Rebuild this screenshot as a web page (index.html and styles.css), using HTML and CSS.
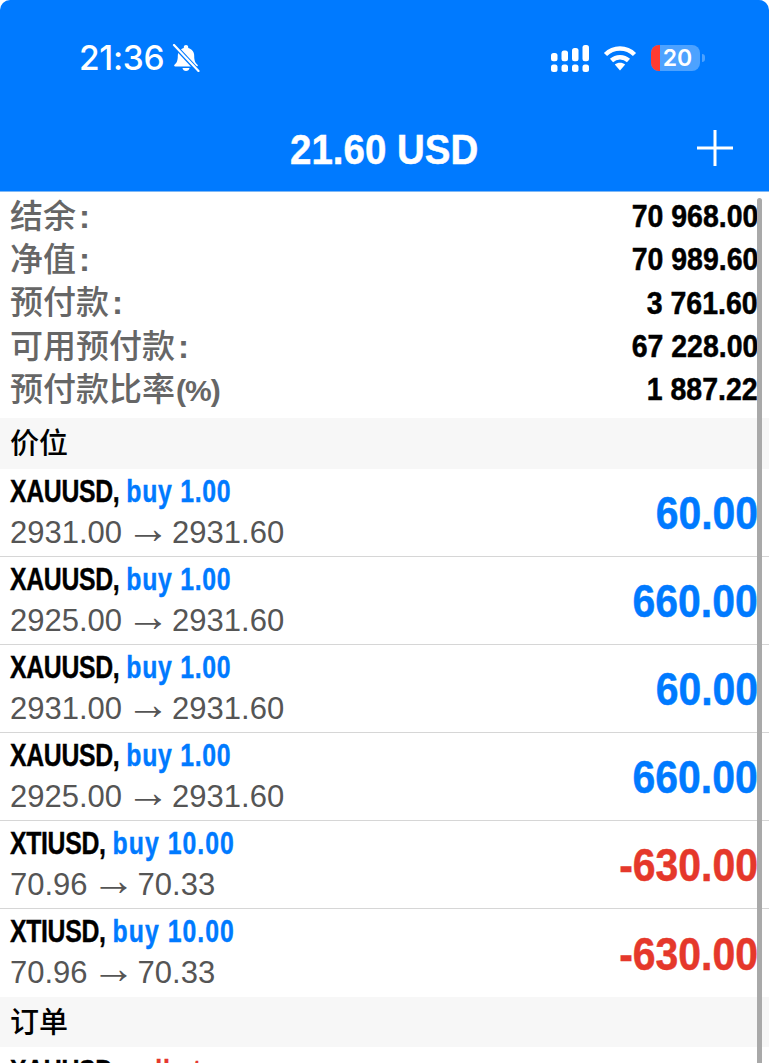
FILE: index.html
```html
<!DOCTYPE html>
<html lang="zh">
<head>
<meta charset="utf-8">
<title>交易</title>
<link rel="stylesheet" href="styles.css">
</head>
<body>
<div class="screen">
  <header class="topbar">
    <div class="status">
      <div class="status-left">
        <span class="clock">21:36</span>
        <svg class="bell" viewBox="0 0 28 28" width="28" height="28">
          <path fill="#fff" d="M14 1c-1.300 0-2.200 .9-2.200 2.100v.9C7.800 5 5.800 8.200 5.800 12c0 4.800-1.100 6.800-3.300 8.800-.7.700-.2 1.800.8 1.800h21.400c1 0 1.500-1.100.8-1.800-2.200-2-3.300-4-3.300-8.800 0-3.800-2-7-6-8v-.9C16.200 1.900 15.300 1 14 1z"/>
          <path fill="#fff" d="M10.500 24h7c-.3 1.800-1.700 3-3.500 3s-3.200-1.200-3.500-3z"/>
          <path stroke="#007aff" stroke-width="4.500" d="M1 0l26 28"/>
          <path stroke="#fff" stroke-width="2.200" stroke-linecap="round" d="M2 1l24.500 26"/>
        </svg>
      </div>
      <div class="status-right">
        <svg class="signal" viewBox="0 0 38 27" width="38" height="27">
          <g fill="#fff">
            <rect x="0" y="8" width="6.500" height="8.300" rx="2.500"/>
            <rect x="10.500" y="5.500" width="6.500" height="10.800" rx="2.500"/>
            <rect x="21" y="3" width="6.500" height="13.300" rx="2.500"/>
            <rect x="31.500" y="0" width="6.500" height="16.300" rx="2.500"/>
            <rect x="0" y="19.500" width="6.500" height="7.500" rx="2.500"/>
            <rect x="10.500" y="19.500" width="6.500" height="7.500" rx="2.500"/>
            <rect x="21" y="19.500" width="6.500" height="7.500" rx="2.500"/>
            <rect x="31.500" y="19.500" width="6.500" height="7.500" rx="2.500"/>
          </g>
        </svg>
        <svg class="wifi" viewBox="0 0 34 26" width="34" height="26">
          <path fill="none" stroke="#fff" stroke-width="4.500" d="M2.500 9.500C10.500 1.500 23.500 1.500 31.500 9.500"/>
          <path fill="none" stroke="#fff" stroke-width="4.500" d="M8.500 15.500C13.200 11 20.800 11 25.500 15.500"/>
          <path fill="#fff" d="M11.800 19.500c3-2.400 7.400-2.400 10.400 0L17 25.500z"/>
        </svg>
        <div class="battery">
          <div class="battery-body">
            <span class="battery-fill"></span>
            <span class="battery-level">20</span>
          </div>
          <span class="battery-tip"></span>
        </div>
      </div>
    </div>
    <div class="navrow">
      <h1 class="balance">21.60 USD</h1>
      <svg class="add" viewBox="0 0 36 36" width="36" height="36">
        <path stroke="#fff" stroke-width="3" d="M18 0v36M0 18h36"/>
      </svg>
    </div>
  </header>

  <div class="content">
    <span class="scrollbar"></span>
    <section class="summary">
      <div class="summary-row"><span class="label">结余<b class="colon">:</b></span><span class="amount">70 968.00</span></div>
      <div class="summary-row"><span class="label">净值<b class="colon">:</b></span><span class="amount">70 989.60</span></div>
      <div class="summary-row"><span class="label">预付款<b class="colon">:</b></span><span class="amount">3 761.60</span></div>
      <div class="summary-row"><span class="label">可用预付款<b class="colon">:</b></span><span class="amount">67 228.00</span></div>
      <div class="summary-row"><span class="label">预付款比率<b class="unit">(%)</b></span><span class="amount">1 887.22</span></div>
    </section>

    <h2 class="section-title">价位</h2>

    <div class="trade">
      <div class="trade-info">
        <div class="trade-head"><span class="symbol">XAUUSD,</span> <span class="side">buy 1.00</span></div>
        <div class="trade-price">2931.00<span class="arrow">→</span>2931.60</div>
      </div>
      <div class="profit">60.00</div>
    </div>
    <div class="trade">
      <div class="trade-info">
        <div class="trade-head"><span class="symbol">XAUUSD,</span> <span class="side">buy 1.00</span></div>
        <div class="trade-price">2925.00<span class="arrow">→</span>2931.60</div>
      </div>
      <div class="profit">660.00</div>
    </div>
    <div class="trade">
      <div class="trade-info">
        <div class="trade-head"><span class="symbol">XAUUSD,</span> <span class="side">buy 1.00</span></div>
        <div class="trade-price">2931.00<span class="arrow">→</span>2931.60</div>
      </div>
      <div class="profit">60.00</div>
    </div>
    <div class="trade">
      <div class="trade-info">
        <div class="trade-head"><span class="symbol">XAUUSD,</span> <span class="side">buy 1.00</span></div>
        <div class="trade-price">2925.00<span class="arrow">→</span>2931.60</div>
      </div>
      <div class="profit">660.00</div>
    </div>
    <div class="trade">
      <div class="trade-info">
        <div class="trade-head"><span class="symbol">XTIUSD,</span> <span class="side side-long">buy 10.00</span></div>
        <div class="trade-price">70.96<span class="arrow">→</span>70.33</div>
      </div>
      <div class="profit loss">-630.00</div>
    </div>
    <div class="trade trade-end">
      <div class="trade-info">
        <div class="trade-head"><span class="symbol">XTIUSD,</span> <span class="side side-long">buy 10.00</span></div>
        <div class="trade-price">70.96<span class="arrow">→</span>70.33</div>
      </div>
      <div class="profit loss">-630.00</div>
    </div>

    <h2 class="section-title">订单</h2>

    <div class="trade trade-end trade-pending">
      <div class="trade-info">
        <div class="trade-head"><span class="symbol">XAUUSD,</span> <span class="side sell">sell stop</span></div>
      </div>
    </div>
  </div>
</div>
</body>
</html>
```
FILE: styles.css
```css
* { box-sizing: border-box; }

html, body {
  margin: 0;
  background: #fff;
}

body {
  font-family: "Liberation Sans", "Noto Sans CJK SC", sans-serif;
}

.screen {
  width: 769px;
  height: 1063px;
  overflow: hidden;
}

.topbar {
  height: 192px;
  background: #007aff;
  border-radius: 10px 10px 0 0;
  border-bottom: 1px solid #7fb8f5;
  color: #fff;
}

.status {
  height: 116px;
  padding: 41px 64px 0 79px;
  display: flex;
  justify-content: space-between;
  align-items: flex-start;
}

.status-left {
  display: flex;
  align-items: center;
  gap: 8px;
  height: 34px;
}

.clock {
  font-family: Inter, "Liberation Sans", sans-serif;
  font-size: 33.500px;
  font-weight: 500;
  letter-spacing: -0.3px;
}

.bell { display: block; }

.status-right {
  display: flex;
  align-items: center;
  gap: 14px;
  height: 34px;
}

.signal, .wifi { display: block; }

.battery {
  display: flex;
  align-items: center;
  gap: 2px;
}

.battery-body {
  position: relative;
  width: 49px;
  height: 26px;
  border-radius: 8px;
  background: #4da2ff;
  overflow: hidden;
  text-align: center;
}

.battery-fill {
  position: absolute;
  left: 0;
  top: 0;
  width: 9px;
  height: 100%;
  background: #ff3b30;
}

.battery-level {
  position: relative;
  font-family: Inter, "Liberation Sans", sans-serif;
  font-size: 23px;
  font-weight: 600;
  line-height: 26px;
  left: 2px;
}

.battery-tip {
  width: 3px;
  height: 8px;
  border-radius: 0 3px 3px 0;
  background: #4da2ff;
}

.navrow {
  height: 75px;
  position: relative;
  display: flex;
  justify-content: center;
  align-items: flex-start;
}

.balance {
  margin: 7px 0 0;
  font-size: 43px;
  line-height: 52px;
  font-weight: 700;
  -webkit-text-stroke: 0.5px #fff;
  transform: scaleX(0.895);
}

.add {
  position: absolute;
  right: 36px;
  top: 14px;
}

.content {
  position: relative;
}

.scrollbar {
  position: absolute;
  top: 6px;
  right: 7px;
  width: 5px;
  height: 900px;
  border-radius: 3px;
  background: #a9a9a9;
  z-index: 2;
}

.summary {
  padding: 2px 11px 6px 10px;
  height: 226px;
}

.summary-row {
  display: flex;
  justify-content: space-between;
  align-items: center;
  height: 43.300px;
}

.label {
  margin-top: -4px;
  font-size: 33px;
  font-weight: 500;
  color: #666;
}

.colon {
  margin-left: 3px;
  font-weight: 700;
}

.unit {
  margin-left: 1px;
  font-size: 30px;
  font-weight: 700;
  letter-spacing: -1px;
}

.amount {
  margin-top: 2px;
  font-size: 32px;
  font-weight: 700;
  color: #000;
  -webkit-text-stroke: 0.5px #000;
  transform: scaleX(0.89);
  transform-origin: right center;
}

.section-title {
  margin: 0;
  height: 50.500px;
  padding: 0 10px;
  background: #f7f7f7;
  font-size: 29px;
  font-weight: 500;
  line-height: 53px;
  color: #000;
}

.trade {
  height: 88px;
  padding: 0 11px 0 10px;
  border-bottom: 1px solid #d6d6d6;
  display: flex;
  justify-content: space-between;
  align-items: center;
}

.trade-end { border-bottom: 0; }

.trade-pending { margin-top: 1px; }

.trade-info { min-height: 81px; }

.trade-head {
  font-size: 31px;
  line-height: 40px;
  font-weight: 700;
  white-space: nowrap;
  -webkit-text-stroke: 0.4px currentColor;
  transform: scaleX(0.8);
  transform-origin: left center;
}

.symbol {
  color: #000;
  letter-spacing: -0.4px;
}

.side {
  color: #007aff;
  letter-spacing: 0.9px;
}

.side-long { letter-spacing: 1.3px; }

.side.sell { color: #e5382b; }

.trade-price {
  margin-top: 1px;
  font-size: 31px;
  line-height: 40px;
  color: #555;
}

.arrow {
  display: inline-block;
  margin: 0 2px 0 4px;
  font-size: 44px;
  line-height: 0;
}

.profit {
  padding-top: 2px;
  font-size: 46px;
  font-weight: 700;
  color: #007aff;
  -webkit-text-stroke: 0.5px currentColor;
  transform: scaleX(0.89);
  transform-origin: right center;
}

.profit.loss { color: #e5382b; }
```
